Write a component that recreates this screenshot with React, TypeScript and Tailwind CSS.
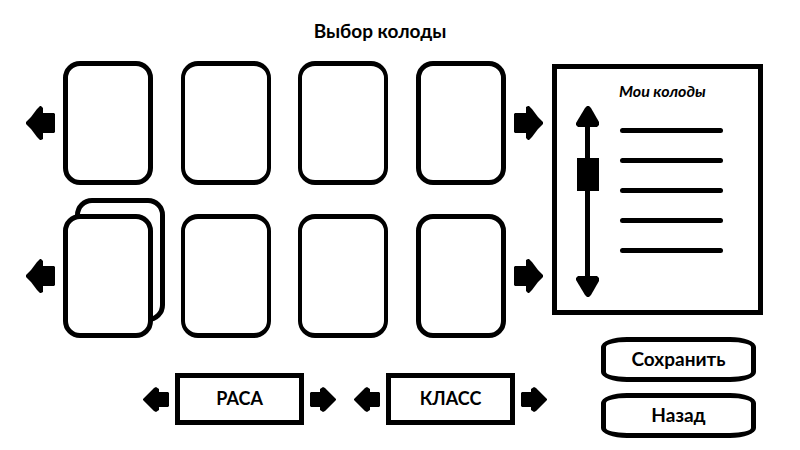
import { useState } from "react";

type Direction = "left" | "right";

function LargeArrow({ direction, label }: { direction: Direction; label: string }) {
  return (
    <button type="button" aria-label={label} className="shrink-0 cursor-pointer">
      <svg
        viewBox="0 0 29 34"
        className={direction === "right" ? "block h-[34px] w-[29px] rotate-180" : "block h-[34px] w-[29px]"}
      >
        <path d="M0 16 L5 11 L11 3 L14 0 H15 L17 2 V7 H28 L29 8 V26 L28 27 H17 V33 L15 34 H14 L11 31 L5 23 L0 18 Z" />
      </svg>
    </button>
  );
}

function SmallArrow({ direction, label }: { direction: Direction; label: string }) {
  return (
    <button type="button" aria-label={label} className="shrink-0 cursor-pointer">
      <svg
        viewBox="0 0 26 25"
        className={direction === "right" ? "block h-[25px] w-[26px] rotate-180" : "block h-[25px] w-[26px]"}
      >
        <path d="M0 12 L11 1 L13 0 L16 2 V5 H25 L26 6 V19 L25 20 H16 V23 L13 25 L11 24 L0 13 Z" />
      </svg>
    </button>
  );
}

const cardFrame = "h-[124px] w-[90px] rounded-[17px] border-5 border-black bg-white";
const slimCardFrame = "h-[124px] w-[90px] rounded-[17px] border-x-4 border-y-5 border-black bg-white";

function CardRow({ name, stacked = false }: { name: string; stacked?: boolean }) {
  return (
    <section aria-label={name} className="flex items-center gap-2">
      <LargeArrow direction="left" label="Предыдущие карты" />
      <ul className="flex flex-1 justify-between">
        <li className="relative isolate">
          {stacked && <div className={`absolute -top-4 left-3 -z-10 ${cardFrame}`} />}
          <div className={cardFrame} />
        </li>
        <li className={slimCardFrame} />
        <li className={slimCardFrame} />
        <li className={cardFrame} />
      </ul>
      <LargeArrow direction="right" label="Следующие карты" />
    </section>
  );
}

function Selector({ label }: { label: string }) {
  return (
    <div className="flex items-center gap-1.5">
      <SmallArrow direction="left" label={`${label}: назад`} />
      <div className="flex h-[52px] w-[129px] items-center justify-center border-5 border-black pb-0.5 text-[18px] leading-6 font-bold">
        {label}
      </div>
      <SmallArrow direction="right" label={`${label}: вперёд`} />
    </div>
  );
}

function DeckScroller() {
  const [position, setPosition] = useState(27);
  const move = (step: number) => setPosition((p) => Math.min(100, Math.max(0, p + step)));

  return (
    <div className="flex w-6 flex-col items-center">
      <button type="button" aria-label="Вверх" onClick={() => move(-10)} className="cursor-pointer">
        <svg viewBox="0 0 24 21" className="block h-[21px] w-6">
          <path d="M11 0 H13 L15 2 L23 16 V19 L21 21 H2 L0 19 V17 L9 2 Z" />
        </svg>
      </button>
      <input
        type="range"
        aria-label="Прокрутка колод"
        value={position}
        onChange={(e) => setPosition(Number(e.target.value))}
        className="m-0 h-[149px] w-[22px] cursor-pointer appearance-none bg-[linear-gradient(to_right,transparent_8px,black_8px,black_13px,transparent_13px)] [writing-mode:vertical-lr] [&::-webkit-slider-thumb]:h-[33px] [&::-webkit-slider-thumb]:w-[22px] [&::-webkit-slider-thumb]:appearance-none [&::-webkit-slider-thumb]:bg-black"
      />
      <button type="button" aria-label="Вниз" onClick={() => move(10)} className="cursor-pointer">
        <svg viewBox="0 0 24 21" className="block h-[21px] w-6 -scale-y-100">
          <path d="M11 0 H13 L15 2 L23 16 V19 L21 21 H2 L0 19 V17 L9 2 Z" />
        </svg>
      </button>
    </div>
  );
}

function MyDecks() {
  return (
    <section className="h-[251px] border-5 border-black pt-3">
      <h2 className="pl-[62px] text-[16px] leading-5 font-bold italic">Мои колоды</h2>
      <div className="mt-[5px] flex gap-5 pl-[19px]">
        <DeckScroller />
        <ul className="flex w-[103px] flex-col gap-[25px] pt-[22px]">
          {[1, 2, 3, 4, 5].map((deck) => (
            <li key={deck} className="h-[5px] rounded-full bg-black" />
          ))}
        </ul>
      </div>
    </section>
  );
}

function ActionButton({ children }: { children: string }) {
  return (
    <button
      type="button"
      className="h-[45px] cursor-pointer rounded-[26px/10px] border-5 border-black pb-0.5 text-[19px] leading-6 font-bold"
    >
      {children}
    </button>
  );
}

export default function App() {
  return (
    <main className="min-h-screen bg-white pr-[37px] pl-[26px] font-['Lato','Open_Sans',sans-serif] text-black">
      <h1 className="pt-[19px] pr-[29px] pb-[18px] text-center text-[19px] leading-6 font-bold">Выбор колоды</h1>
      <div className="grid grid-cols-[517fr_211fr] gap-[9px]">
        <div className="min-w-0">
          <div className="flex flex-col gap-[29px]">
            <CardRow name="Первый ряд" />
            <CardRow name="Второй ряд" stacked />
          </div>
          <div className="mt-[35px] flex w-max gap-[18px] pl-[117px]">
            <Selector label="РАСА" />
            <Selector label="КЛАСС" />
          </div>
        </div>
        <div className="min-w-0 pt-[3px]">
          <MyDecks />
          <div className="mt-[22px] mr-[7px] ml-[49px] flex flex-col gap-[11px]">
            <ActionButton>Сохранить</ActionButton>
            <ActionButton>Назад</ActionButton>
          </div>
        </div>
      </div>
    </main>
  );
}
